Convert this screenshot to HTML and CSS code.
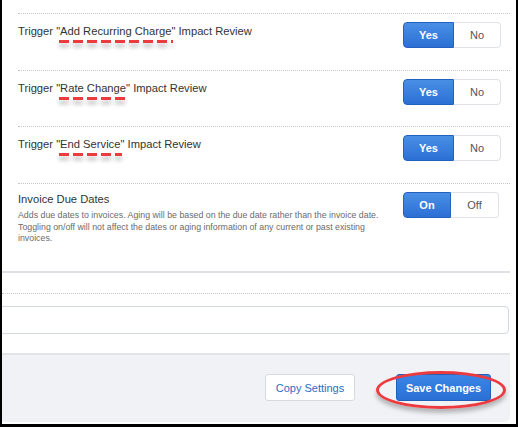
FILE: index.html
```html
<!DOCTYPE html>
<html>
<head>
<meta charset="utf-8">
<link rel="stylesheet" href="styles.css">
</head>
<body>
<div class="frame">
  <div class="settings">
    <div class="row">
      <div class="label">Trigger "<span class="mark">Add Recurring Charge</span>" Impact Review</div>
      <div class="toggle"><span class="seg on">Yes</span><span class="seg">No</span></div>
    </div>
    <div class="row row-short">
      <div class="label">Trigger "<span class="mark">Rate Change</span>" Impact Review</div>
      <div class="toggle"><span class="seg on">Yes</span><span class="seg">No</span></div>
    </div>
    <div class="row">
      <div class="label">Trigger "<span class="mark">End Service</span>" Impact Review</div>
      <div class="toggle"><span class="seg on">Yes</span><span class="seg">No</span></div>
    </div>
    <div class="row row-tall">
      <div class="label">
        <div class="title">Invoice Due Dates</div>
        <p class="desc">Adds due dates to invoices. Aging will be based on the due date rather than the invoice date. Toggling on/off will not affect the dates or aging information of any current or past existing invoices.</p>
      </div>
      <div class="toggle toggle-onoff"><span class="seg on">On</span><span class="seg">Off</span></div>
    </div>
  </div>
  <div class="divider"></div>
  <div class="field-row">
    <div class="field"></div>
  </div>
  <div class="footer">
    <button class="btn btn-default">Copy Settings</button>
    <span class="circled"><button class="btn btn-primary">Save Changes</button></span>
  </div>
</div>
</body>
</html>
```
FILE: styles.css
```css
* { box-sizing: border-box; }

html, body {
  margin: 0;
  padding: 0;
  background: #fff;
}

body {
  font-family: "Liberation Sans", Arial, sans-serif;
  color: #333;
}

.frame {
  width: 518px;
  height: 427px;
  border-left: 2px solid #000;
  border-right: 2px solid #000;
  border-bottom: 3px solid #000;
  padding-right: 6px;
  overflow: hidden;
}

.settings {
  padding: 13px 0 0 16px;
}

.row {
  display: flex;
  justify-content: space-between;
  align-items: flex-start;
  height: 57px;
  border-top: 1px dotted #c8c8c8;
  padding: 8px 10px 0 0;
}

.row-short {
  height: 56px;
}

.row-tall {
  height: 87px;
}

.label {
  padding-top: 1px;
  font-size: 11.2px;
  line-height: 16px;
  color: #333;
}

.mark {
  position: relative;
}

/* red dashed highlight beneath the quoted action names */
.mark::after {
  content: "";
  position: absolute;
  left: -1px;
  right: -2px;
  top: 15px;
  height: 3px;
  background: repeating-linear-gradient(90deg, #ec3b3f 0 10px, transparent 10px 14px);
  filter: drop-shadow(0 4px 2px rgba(0, 0, 0, 0.28));
}

.title {
  font-size: 11.2px;
  line-height: 14px;
  color: #333;
  margin-top: -1px;
}

.desc {
  margin: 4px 0 0;
  width: 380px;
  font-size: 8.8px;
  line-height: 11.5px;
  color: #6b6b6b;
}

.toggle {
  display: flex;
  flex: none;
  width: 98px;
  height: 26px;
  border-radius: 4px;
  margin-right: -1px;
}

.toggle-onoff {
  width: 96px;
  margin-right: 1px;
}

.seg {
  flex: 1;
  display: flex;
  align-items: center;
  justify-content: center;
  font-size: 11px;
  color: #555;
  border: 1px solid #dfe3e8;
  border-left: none;
  border-radius: 0 4px 4px 0;
  background: #fff;
}

.seg.on {
  flex: none;
  width: 51px;
  color: #fff;
  font-weight: bold;
  border: 1px solid #2460bd;
  border-radius: 4px 0 0 4px;
  background: linear-gradient(#4a8fe6, #2c6fd5);
}

.toggle-onoff .seg.on {
  width: 48px;
}

.divider {
  margin-top: 1px;
  height: 2px;
  background: #dde1e6;
}

.field-row {
  margin-top: 20px;
  border-top: 1px dotted #c8c8c8;
  padding: 12px 1px 0 0;
}

.field {
  height: 28px;
  margin-left: -6px;
  border: 1px solid #d3d8de;
  border-radius: 4px;
  background: #fff;
}

.footer {
  margin-top: 19px;
  height: 69px;
  border-top: 2px solid #e1e4e9;
  border-bottom-right-radius: 5px;
  background: #f1f2f5;
  display: flex;
  justify-content: flex-end;
  align-items: flex-start;
  padding: 19px 19px 0 0;
}

.btn {
  font-family: "Liberation Sans", Arial, sans-serif;
  font-size: 11px;
  height: 27px;
  border-radius: 3px;
  padding: 0;
  cursor: pointer;
}

.btn-default {
  width: 90px;
  background: #fff;
  border: 1px solid #d5dae0;
  color: #2b6cc0;
  margin-right: 41px;
}

.btn-primary {
  width: 95px;
  background: linear-gradient(#3a86e6, #2a70d6);
  border: 1px solid #2260b8;
  color: #fff;
  font-weight: bold;
}

.circled {
  position: relative;
  display: flex;
}

/* red ellipse drawn around the save action */
.circled::before {
  content: "";
  position: absolute;
  left: -20px;
  right: -15px;
  top: -3px;
  bottom: -8px;
  border: 3px solid #ec3b3f;
  border-radius: 50%;
  box-shadow: 0 4px 4px rgba(0, 0, 0, 0.25);
  pointer-events: none;
}
```
